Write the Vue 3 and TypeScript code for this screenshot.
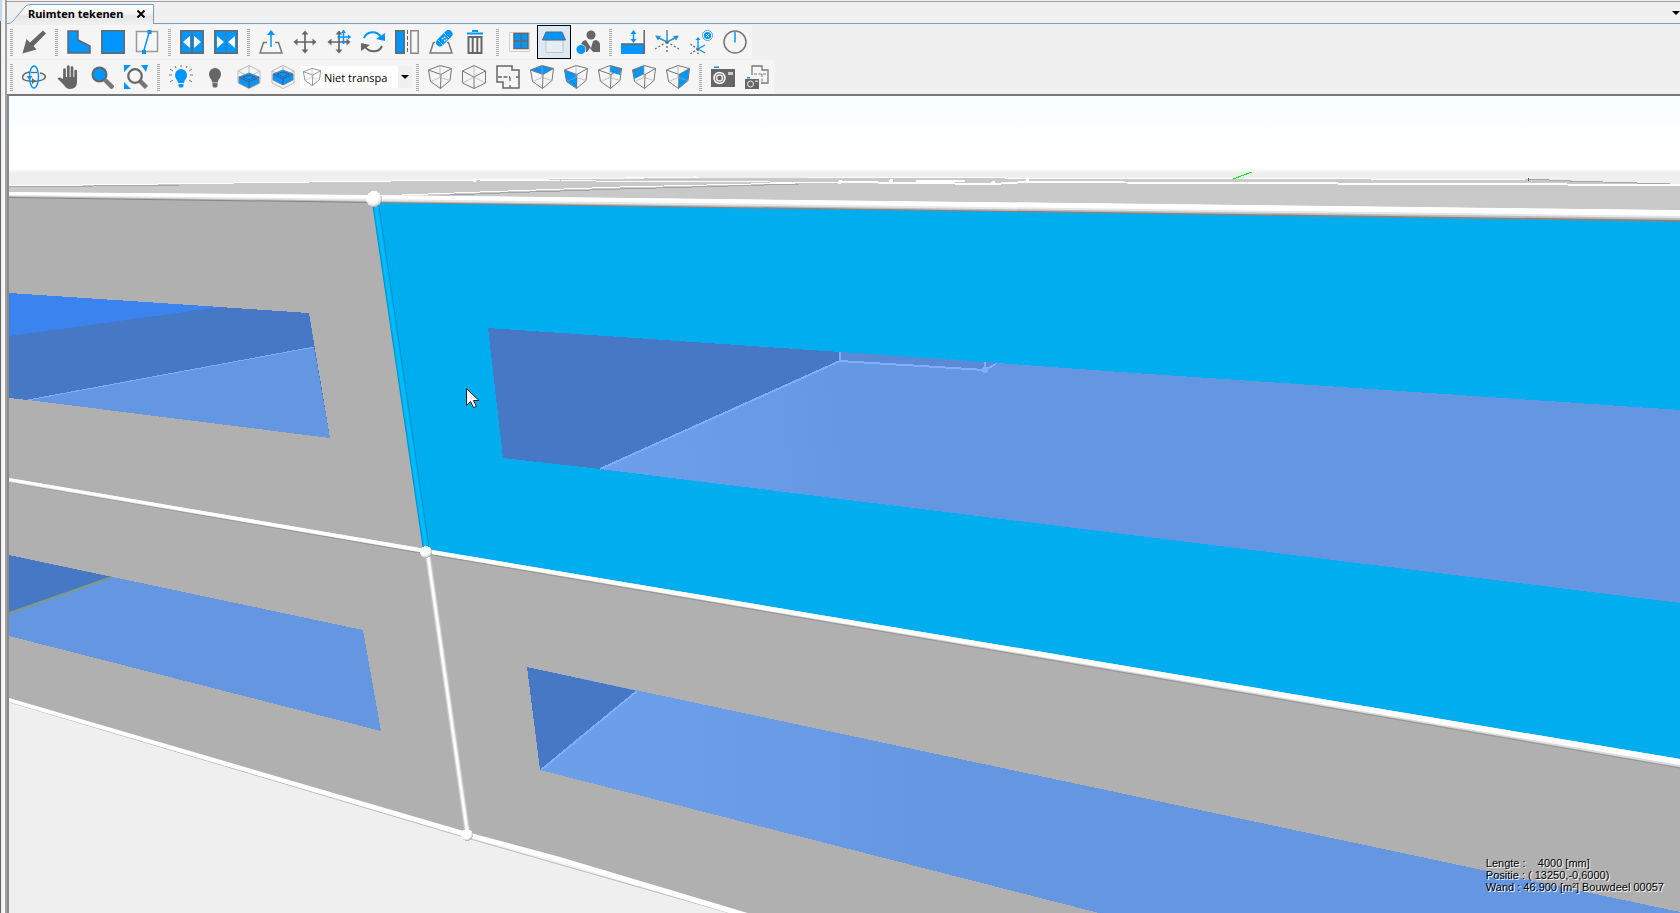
<script setup lang="ts">
import { ref } from 'vue'

interface Tool {
  id: string
  label: string
}

const box = '<path d="M.5 5 12 .5 23.5 3.5 22 15.500 12.500 23.500 2.500 16.500ZM.5 5 13 9.500 23.500 3.500M13 9.500 12.500 23.500" fill="none" stroke="#777"/><path d="M12 .5v12L2.500 16.500M12 12.500 22 15.500" fill="none" stroke="#aaa" stroke-width=".7"/>'

const slab = (y: number): string =>
  `<path d="M12 .5 23 6v12l-11 5.500L1 18V6ZM1 6l11 5.500L23 6M12 .5v12" fill="none" stroke="#bbb"/><path d="M2 ${y}l10-4 10 4v6l-10 5-10-5Z" fill="#0096ff" stroke="#6a8aa5"/><path d="M2 ${y}l10 5 10-5M12 ${y + 5}v6" fill="none" stroke="#557"/><path d="M6 ${y}l6-2 6 2-6 3Z" fill="#0096ff" stroke="#456" stroke-dasharray="2 1"/>`

const icons: Record<string, string> = {
  select: '<path d="M.5 23.500 4.500 9l3.500 3.500L21 .5 24 3.500 11.500 16l3 3.500Z" fill="#666"/>',
  lshape: '<path d="M1 1h10v9l12 6v7H1Z" fill="#0096ff" stroke="#666" stroke-width="1.500"/>',
  square: '<path d="M.8.8h22.400v22.400H.8Z" fill="#0096ff" stroke="#666" stroke-width="1.500"/>',
  divide: '<path d="M1.500 1.500h21v20h-21Z" fill="#f8f8f8" stroke="#999" stroke-width="1.500"/><path d="m14.500 1-6 21" stroke="#0096ff" stroke-width="1.500"/><path d="M12.500 0h4v4h-4ZM7 20h4v4H7Z" fill="#0096ff"/>',
  expand: '<path d="M.8.8h22.400v22.400H.8Z" fill="#0096ff" stroke="#666" stroke-width="1.500"/><path d="M12 1v22" stroke="#666" stroke-width="1.500"/><path d="M10 6v12l-7-6ZM14 6v12l7-6Z" fill="#fff"/>',
  collapse: '<path d="M.8.8h22.400v22.400H.8Z" fill="#0096ff" stroke="#666" stroke-width="1.500"/><path d="M12 1v22" stroke="#666" stroke-dasharray="3 1"/><path d="M3 6v12l7-6ZM21 6v12l-7-6Z" fill="#fff"/>',
  extrude: '<path d="M8 12.500H4.500L1 23h22l-3.500-10.500H16" fill="none" stroke="#777" stroke-width="1.500"/><path d="M12 17V2" stroke="#0096ff" stroke-width="1.500"/><path d="m8 5 4-5 4 5Z" fill="#0096ff"/>',
  move: '<path d="M12 2v20M2 12h20" stroke="#666" stroke-width="1.700"/><path d="m8.500 4.500 3.500-4 3.500 4ZM8.500 19.500l3.500 4 3.500-4ZM4.500 8.500l-4 3.500 4 3.500ZM19.500 8.500l4 3.500-4 3.500Z" fill="#666"/>',
  movegrid: '<path d="M12 2v20M2 12h20" stroke="#666" stroke-width="1.700"/><path d="m8.500 4.500 3.500-4 3.500 4ZM8.500 19.500l3.500 4 3.500-4ZM4.500 8.500l-4 3.500 4 3.500ZM19.500 8.500l4 3.500-4 3.500Z" fill="#666"/><path d="M16.500 0v14M11 7h12.500" stroke="#0096ff" stroke-width="1.500"/><path d="m14 3 2.500-3L19 3Zm0 8 2.500 3 2.500-3ZM13 4.500 10 7l3 2.500Zm8 0L24 7l-3 2.500Z" fill="#0096ff"/>',
  rotate: '<path d="M3 8C6 .5 16 .5 20 7" fill="none" stroke="#0096ff" stroke-width="2"/><path d="M24 3v8l-9-2Z" fill="#0096ff"/><path d="M21 16c-3 7-13 7-17 .5" fill="none" stroke="#666" stroke-width="2"/><path d="M0 21v-8l9 2Z" fill="#666"/>',
  mirror: '<path d="M.8.8h8.400v22.400H.8Z" fill="#0096ff" stroke="#666" stroke-width="1.500"/><path d="M15.800.8h7.400v22.400h-7.400Z" fill="#f8f8f8" stroke="#888" stroke-width="1.500"/><path d="M12.500 0v24" stroke="#666" stroke-dasharray="4 2"/>',
  patch: '<path d="M6 12.500H4.500L1 23h22l-3.500-10.500H18" fill="none" stroke="#777" stroke-width="1.500"/><path d="m11 12.500 8.500-8.500" stroke="#0096ff" stroke-width="8" stroke-linecap="round"/><path d="m9 10 6 6M15 3l6 6" stroke="#fff" stroke-dasharray="1 1"/><path d="m13 8 4 4M15 7l3 3" stroke="#fff" stroke-width="1.500" stroke-dasharray="1.500 1.500"/>',
  trash: '<path d="M4 3.500h16M9 1h6" stroke="#0096ff" stroke-width="2"/><path d="M5.500 7h13v16h-13ZM9.700 7v16M14.300 7v16" fill="none" stroke="#666" stroke-width="2"/>',
  window: '<path d="M1.500 2.500h20v19h-20Z" fill="#f5f5f5" stroke="#d0d0d0"/><path d="M6 3.500h14v15H6Z" fill="#0096ff" stroke="#666" stroke-width="1.500"/><path d="M13 3v16M6 11h14" stroke="#666" stroke-width="1.300"/>',
  roof: '<path d="M4 10h17v12.500H4Z" fill="#e6eef5" stroke="#c4c4c4"/><path d="M4 2h16l3.500 8H.5Z" fill="#0096ff" stroke="#666"/>',
  people: '<circle cx="15" cy="5" r="4.500" fill="#666"/><path d="m7 11 3-1 3 5 2 3 2-7 3-1q4 1 4 5v7h-7l-3-4-3 4h-1q1-7-5-8Z" fill="#666"/><circle cx="5" cy="19.500" r="4.500" fill="#0096ff"/>',
  level: '<path d="M0 14h24v10H0Z" fill="#0096ff"/><path d="M0 14h23.500M23.200 0v24" stroke="#666" stroke-width="1.500"/><path d="M12.500 2v9" stroke="#0096ff" stroke-width="1.500"/><path d="m9.500 4 3-4 3 4ZM9.500 9l3 4 3-4Z" fill="#0096ff"/>',
  axes: '<path d="M12 12V0M12 12 2 7M12 12l10-5" stroke="#3390cc" stroke-width="1.500"/><path d="M0 5.500 6 6 3 10.500ZM24 5.500 18 6l3 4.500Z" fill="#2492d8"/><path d="M12 12v12M12 12 0 19M12 12l12 7" stroke="#666" stroke-width="1.300" stroke-dasharray="2 2"/>',
  axesoff: '<circle cx="18.500" cy="5.500" r="5" fill="#fff" stroke="#4a9cd8"/><circle cx="18.500" cy="5.500" r="3.600" fill="#0096ff"/><path d="m17 4 3 3M20 4l-3 3" stroke="#fff"/><path d="M9 19V8M9 19l7-4M9 19l7 4" stroke="#0096ff" stroke-width="1.300"/><path d="m6.500 10 2.500-3 2.500 3Z" fill="#0096ff"/><path d="m9 19-8-5M9 19l-8 5M9 19v5" stroke="#666" stroke-width="1.300" stroke-dasharray="2 1.500"/>',
  dial: '<circle cx="12" cy="12" r="11" fill="none" stroke="#777" stroke-width="1.500"/><path d="M12 12.500V2" stroke="#0096ff" stroke-width="1.500"/>',
  orbit: '<path d="M8 7C0 8 0 13 1 14c3 3 17 3 21 0 2-2 2-5-4-6" fill="none" stroke="#666" stroke-width="1.500"/><path d="m10 13 4 3-4 3Z" fill="#666"/><ellipse cx="12" cy="12" rx="4.500" ry="11" fill="none" stroke="#0096ff" stroke-width="1.500"/><path d="M4.500 11h6l-3 4Z" fill="#0096ff"/><path d="M9 7.500h6" stroke="#666" stroke-width="1.300"/>',
  hand: '<path d="M8.500 15V4.500M12.300 13V1.700M16 13V2.500M19.700 14V6" stroke="#666" stroke-width="2.700" stroke-linecap="round"/><path d="M7.200 12H21v5q0 7-7 7-4 0-6-4l-6.500-6.500q2-2.500 5.700.8Z" fill="#666"/>',
  zoom: '<path d="m15 15 8 8" stroke="#777" stroke-width="4.500"/><circle cx="9.500" cy="9.500" r="7" fill="#0096ff" stroke="#666" stroke-width="2"/>',
  zoomfit: '<path d="M0 0h7L0 7ZM24 0h-7l5 7ZM0 24h7l-7-7Z" fill="#0096ff"/><path d="m15.500 15.500 7 7" stroke="#777" stroke-width="4.500"/><circle cx="11" cy="11" r="6.800" fill="#f5f5f5" stroke="#666" stroke-width="2.200"/>',
  lighton: '<path d="M12 4a6.200 6.200 0 0 0-6 6c0 4 3 5 3 8h6c0-3 3-4 3-8a6.200 6.200 0 0 0-6-6Z" fill="#0096ff"/><path d="M9.500 19h5v2l-1 1.500h-3L9.500 21Z" fill="#0096ff"/><path d="M12 0v2M6 1l1 2M18 1l-1 2M1 4l3 2M23 4l-3 2M0 10h3M21 10h3M1 17l3-2M23 17l-3-2" stroke="#777"/>',
  lightoff: '<path d="M12 3a6 6 0 0 0-6 6c0 4 3 5 3 8h6c0-3 3-4 3-8a6 6 0 0 0-6-6Z" fill="#666"/><path d="M9.500 18h5v3l-1 1.500h-3L9.500 21Z" fill="#666"/><path d="M9 17.800h6" stroke="#999"/>',
  slablow: slab(12),
  slabhigh: slab(9),
  box,
  cube: '<path d="M12 .5 23.500 6v12L12 23.500.5 18V6ZM.5 6 12 12l11.500-6M12 12v11.500" fill="none" stroke="#777"/><path d="M12 .5V12M.5 18 12 12l11.500 6" fill="none" stroke="#aaa" stroke-width=".7"/>',
  plan: '<path d="M1 1h15v4h7v18H7v-6H1Z" fill="none" stroke="#666" stroke-width="1.500"/><path d="M2 12h12M14 12v5M20 12h3M14 20v3" stroke="#666" stroke-width="1.300" stroke-dasharray="4 1.500"/>',
  top: '<path d="M.5 5 12 .5 23.500 3.500 13 9.500Z" fill="#0096ff"/>' + box,
  front: '<path d="M.5 5 13 9.500v14L2.500 16.500Z" fill="#0096ff"/>' + box,
  back: '<path d="m12 .5 11.500 3L22 10l-10-3Z" fill="#0096ff"/>' + box,
  left: '<path d="M.5 5 12 .5V9l-9.500 5Z" fill="#0096ff"/>' + box,
  right: '<path d="m13 9.500 10.500-6L22 15.500l-9.500 8Z" fill="#0096ff"/>' + box,
  camera: '<path d="M0 4h24v18H0Z" fill="#666"/><path d="M3 1.500h5V3H3Z" fill="#0096ff"/><circle cx="8.500" cy="13" r="5.500" fill="#666" stroke="#fff" stroke-width="1.500"/><circle cx="8.500" cy="13" r="3" fill="none" stroke="#eee" stroke-width="1.500"/><path d="M17 7h5v3h-5Z" fill="#ccc"/>',
  planshot: '<path d="M7 10V1h10v4h6v13h-7" fill="none" stroke="#777" stroke-width="1.300"/><path d="M9 9h12M17 9v9" stroke="#777" stroke-dasharray="3 1.500"/><path d="M0 14h14v10H0Z" fill="#666"/><path d="M2 12h3v1.500H2Z" fill="#0096ff"/><circle cx="5.500" cy="19" r="3" fill="none" stroke="#eee"/><path d="M10 15.500h3V17h-3Z" fill="#ccc"/>',
}

const t = (id: string, label: string): Tool => ({ id, label })

const editGroups: Tool[][] = [
  [t('select', 'Selecteren')],
  [t('lshape', 'Veelhoek'), t('square', 'Rechthoek'), t('divide', 'Splitsen')],
  [t('expand', 'Uitbreiden'), t('collapse', 'Samenvoegen')],
  [t('extrude', 'Optrekken'), t('move', 'Verplaatsen'), t('movegrid', 'Verplaatsen op raster'), t('rotate', 'Roteren'), t('mirror', 'Spiegelen'), t('patch', 'Herstellen'), t('trash', 'Verwijderen')],
  [t('window', 'Raam'), t('roof', 'Dak'), t('people', 'Personen')],
  [t('level', 'Peil'), t('axes', 'Assen'), t('axesoff', 'Assen uit'), t('dial', 'Noordpijl')],
]

const viewTools: Tool[] = [t('orbit', 'Draaien'), t('hand', 'Schuiven'), t('zoom', 'Zoomen'), t('zoomfit', 'Alles tonen')]
const lightTools: Tool[] = [t('lighton', 'Licht aan'), t('lightoff', 'Licht uit'), t('slablow', 'Onderste laag'), t('slabhigh', 'Bovenste laag')]
const cameraGroups: Tool[][] = [
  [t('box', 'Perspectief'), t('cube', 'Isometrisch'), t('plan', 'Plattegrond'), t('top', 'Boven'), t('front', 'Voor'), t('back', 'Achter'), t('left', 'Links'), t('right', 'Rechts')],
  [t('camera', 'Afbeelding'), t('planshot', 'Afbeelding plattegrond')],
]

const active = ref('roof')
const transparency = ref('Niet transpa')
const readout: string[] = [
  'Lengte :    4000 [mm]',
  'Positie : ( 13250,-0,6000)',
  'Wand : 46.900 [m²] Bouwdeel 00057',
]
</script>

<template>
  <div class="app">
    <aside class="edge"><span class="edge-top"></span></aside>
    <main class="pane">
      <header class="tabs">
        <div class="tab">
          <svg class="tab-shape" viewBox="0 0 146 20" preserveAspectRatio="none" aria-hidden="true">
            <defs>
              <linearGradient id="tabfill" x1="0" y1="0" x2="0" y2="1">
                <stop offset="0" stop-color="#fff" />
                <stop offset="0.5" stop-color="#f2f2f2" />
                <stop offset="0.6" stop-color="#e6e6e6" />
                <stop offset="1" stop-color="#f0f0f0" />
              </linearGradient>
            </defs>
            <path d="M0 20Q3 19 5 17L16 4Q18 .5 22 .5H145.500V20" fill="url(#tabfill)" stroke="#7e9cbc" />
          </svg>
          <span class="tab-title">Ruimten tekenen</span>
          <button class="close" aria-label="Sluiten">
            <svg viewBox="0 0 10 8"><path d="m1.500.5 7 7M8.500.5l-7 7" stroke="#000" stroke-width="2" /></svg>
          </button>
        </div>
        <button class="tab-menu" aria-label="Vensters">
          <svg viewBox="0 0 8 4"><path d="M0 0h8L4 4Z" /></svg>
        </button>
      </header>

      <nav class="bars">
        <div class="bar">
          <div v-for="(group, g) in editGroups" :key="g" class="group">
            <button
              v-for="tool in group"
              :key="tool.id"
              class="tool"
              :class="{ active: active === tool.id }"
              :aria-label="tool.label"
              @click="active = tool.id"
            >
              <svg viewBox="0 0 24 24" v-html="icons[tool.id]"></svg>
            </button>
          </div>
        </div>
        <div class="bar">
          <div class="group">
            <button v-for="tool in viewTools" :key="tool.id" class="tool" :aria-label="tool.label">
              <svg viewBox="0 0 24 24" v-html="icons[tool.id]"></svg>
            </button>
          </div>
          <div class="group">
            <button v-for="tool in lightTools" :key="tool.id" class="tool" :aria-label="tool.label">
              <svg viewBox="0 0 24 24" v-html="icons[tool.id]"></svg>
            </button>
            <div class="combo">
              <svg class="combo-icon" viewBox="0 0 24 24" v-html="icons.box"></svg>
              <select v-model="transparency" aria-label="Transparantie">
                <option>Niet transpa</option>
                <option>Transparant</option>
              </select>
              <svg class="combo-arrow" viewBox="0 0 8 4"><path d="M0 0h8L4 4Z" /></svg>
            </div>
          </div>
          <div v-for="(group, g) in cameraGroups" :key="g" class="group">
            <button v-for="tool in group" :key="tool.id" class="tool" :aria-label="tool.label">
              <svg viewBox="0 0 24 24" v-html="icons[tool.id]"></svg>
            </button>
          </div>
        </div>
      </nav>

      <section class="viewport">
        <svg class="scene" viewBox="9 96 1671 817" preserveAspectRatio="xMinYMin slice" role="img" aria-label="3D-weergave">
          <defs>
            <linearGradient id="sky" x1="0" y1="0" x2="0" y2="1">
              <stop offset="0" stop-color="#f8fdff" />
              <stop offset="0.75" stop-color="#fff" />
              <stop offset="0.94" stop-color="#fff" />
              <stop offset="1" stop-color="#efefef" />
            </linearGradient>
            <linearGradient id="floorA" gradientUnits="userSpaceOnUse" x1="600" y1="440" x2="880" y2="400">
              <stop offset="0" stop-color="#6d9fea" />
              <stop offset="1" stop-color="#6596e2" />
            </linearGradient>
            <linearGradient id="floorB" gradientUnits="userSpaceOnUse" x1="620" y1="0" x2="980" y2="0">
              <stop offset="0" stop-color="#6c9eea" />
              <stop offset="1" stop-color="#6596e2" />
            </linearGradient>
            <radialGradient id="node" cx="0.42" cy="0.38" r="0.62">
              <stop offset="0.6" stop-color="#fff" />
              <stop offset="0.85" stop-color="#ddd" />
              <stop offset="1" stop-color="#aaa" />
            </radialGradient>
          </defs>

          <path d="M9 173H1680V913H9Z" fill="#efefef" />
          <path d="M9 96H1680V173H9Z" fill="url(#sky)" />

          <!-- roof plane seen edge-on -->
          <path d="M9 186 475 180 700 178H1200L1525 179 1680 184V215H9Z" fill="#c9c9c9" />
          <g fill="none" stroke="#fff">
            <path d="M9 186 310 182 475 180 700 177H808L1006 178H1212L1525 180" />
            <path d="M480 180H560L596 181H700L839 183" />
            <path d="M376 196 480 192 620 187 839 182" />
            <path d="M839 182 993 184 1027 182M916 181H965" stroke-width="2" />
            <path d="M1027 182 1220 183 1680 185" stroke-width="2" />
          </g>
          <path d="M376 198 500 193 620 189 800 184M9 187 180 185M1528 179 1570 181 1670 184" fill="none" stroke="#a5a5a5" />
          <path d="M1528 178v3" stroke="#555" />
          <g fill="#fff">
            <circle cx="475" cy="180" r="2" /><circle cx="695" cy="177" r="1" /><circle cx="840" cy="182" r="2" />
            <circle cx="891" cy="181" r="2" /><circle cx="993" cy="183" r="2" /><circle cx="1006" cy="178" r="1" /><circle cx="1027" cy="181" r="2" />
          </g>
          <path d="m1233 179 19-7" stroke="#00f01a" />

          <!-- facades -->
          <path d="M9 195 374 199 1680 218V913H740L467 835 9 700Z" fill="#b0b0b0" />
          <path d="M374 202 1680 220V761L426 551Z" fill="#00aeef" />

          <!-- upper left window -->
          <path d="M9 293 309 313 330 438 28 400 9 398Z" fill="#4678c6" />
          <path d="m9 293 212 14L9 336Z" fill="#3b83ef" />
          <path d="m28 400 286-53 16 91Z" fill="#6596e2" />
          <path d="m28 400 286-53" stroke="#80adff" />

          <!-- upper right window -->
          <path d="M488 328 840 352V361L600 469 503 458Z" fill="#4678c6" />
          <path d="M840 352 1000 363 993 370H840Z" fill="#5a8ad5" />
          <path d="M600 469 840 361 985 370 997 363 1120 372 1680 410V603L841 499Z" fill="url(#floorA)" />
          <path d="M600 469 840 361 985 370 996 364" fill="none" stroke="#80adff" stroke-width="2" />
          <path d="M840 352v9M985 362v9" stroke="#80adff" stroke-width="2" />
          <circle cx="985" cy="370" r="3" fill="#80adff" />

          <!-- lower left window -->
          <path d="M9 555 363 630 381 731 9 636Z" fill="#6596e2" />
          <path d="m9 555 103 22L9 613Z" fill="#4678c6" />
          <path class="smooth" d="M9 613 112 577" stroke="#7f9b80" stroke-width="2" />

          <!-- lower right window -->
          <path d="M527 667 1680 912V913H1099L540 770Z" fill="url(#floorB)" />
          <path d="M527 667 637 691 540 770Z" fill="#4678c6" />
          <path d="M541 770 637 691" stroke="#80adff" stroke-width="2" />

          <!-- beams -->
          <g class="smooth">
            <path d="M9 192 374 195 1680 210V222L374 203 9 198Z" fill="#858585" />
            <path d="M9 192 374 195 1680 210V220L374 202 9 197Z" fill="#bdbdbd" />
            <path d="M9 192 374 195 1680 210V218L374 201 9 196Z" fill="#e6e6e6" />
            <path d="M9 192 374 195 1680 210V216L374 199 9 195Z" fill="#fff" />
            <path d="M376 206 426 547" stroke="#0093cc" stroke-width="7" />
            <path d="M376 206 426 547" stroke="#00aeef" stroke-width="5" />
            <path d="M376 206 426 547" stroke="#00bdff" stroke-width="3" />
            <path d="M9 482 426 554 1120 672 1680 768" fill="none" stroke="#969696" />
            <path d="M9 478 426 549 1120 665 1680 759V767L1120 671 426 553 9 482Z" fill="#dcdcdc" />
            <path d="M9 478 426 549 1120 665 1680 759V765L1120 670 426 553 9 481Z" fill="#fff" />
            <path d="M428 556 467 830" stroke="#c2c2c2" stroke-width="6" />
            <path d="M428 556 467 830" stroke="#e6e6e6" stroke-width="4" />
            <path d="M428 556 467 830" stroke="#fff" stroke-width="2" />
            <path d="M9 702 467 838 733 914" fill="none" stroke="#bbb" />
            <path d="M9 698 467 832 560 857 751 914H732L560 862 467 837 9 702Z" fill="#fff" />
          </g>
          <circle cx="374" cy="199" r="8" fill="url(#node)" />
          <circle cx="426" cy="552" r="6" fill="url(#node)" />
          <circle cx="467" cy="835" r="6" fill="url(#node)" />

          <path class="smooth" d="M466.500 388.500v17l4-4 3 6 3-1-3-6h5.500Z" fill="#fff" stroke="#123" />
        </svg>
        <div class="readout">
          <div v-for="line in readout" :key="line">{{ line }}</div>
        </div>
      </section>
    </main>
  </div>
</template>

<style>
body {
  margin: 0;
  overflow: hidden;
}
</style>

<style scoped>
.app {
  display: flex;
  height: 100vh;
  background: #f0f0f0;
  font-family: 'Open Sans', 'Noto Sans', sans-serif;
  font-size: 11px;
  color: #000;
}
button {
  padding: 0;
  border: 0;
  background: none;
}
svg {
  display: block;
}
.edge {
  width: 5px;
  box-sizing: border-box;
  border-left: 1px solid #666;
  border-right: 2px solid #f7f7f7;
  background: #f0eeee;
}
.edge-top {
  display: block;
  height: 21px;
  margin-left: -1px;
  width: 2px;
  background: #c4d8f0;
}
.pane {
  flex: 1;
  min-width: 0;
  display: flex;
  flex-direction: column;
  border-left: 2px solid #a0a0a0;
}
.tabs {
  display: flex;
  align-items: flex-end;
  justify-content: space-between;
  height: 23px;
  box-sizing: border-box;
  border-top: 1px solid #a0a0a0;
  border-bottom: 1px solid #7e9cbc;
  margin-top: 1px;
}
.tab {
  position: relative;
  display: flex;
  align-items: center;
  height: 20px;
  width: 146px;
  margin-left: 1px;
  margin-bottom: -1px;
}
.tab-shape {
  position: absolute;
  inset: 0;
  width: 100%;
  height: 100%;
}
.tab-title {
  position: relative;
  padding-left: 20px;
  font-family: 'Noto Sans', sans-serif;
  font-weight: 700;
  line-height: 20px;
  white-space: nowrap;
  flex: 1;
}
.close {
  position: relative;
  margin-right: 8px;
}
.close svg {
  width: 10px;
  height: 8px;
}
.tab-menu {
  align-self: center;
}
.tab-menu svg {
  width: 8px;
  height: 4px;
}
.bars {
  display: flex;
  flex-direction: column;
  align-items: flex-start;
  gap: 1px;
  padding-top: 1px;
}
.bar {
  display: flex;
  gap: 1px;
  height: 34px;
  background: #f5f5f5;
}
.group {
  display: flex;
  align-items: center;
}
.group::before {
  content: '';
  width: 3px;
  height: 27px;
  margin: 0 4px 0 3px;
  background: repeating-linear-gradient(to bottom, #a8a8a8 0 1px, #f5f5f5 1px 2px);
}
.tool {
  display: grid;
  place-items: center;
  width: 34px;
  height: 34px;
  box-sizing: border-box;
}
.tool svg {
  width: 24px;
  height: 24px;
}
.tool.active {
  background: #dce9f4;
  border: 1px solid #000;
}
.combo {
  position: relative;
  display: flex;
  align-items: center;
  width: 112px;
  height: 22px;
  background: #fff;
}
.combo-icon {
  width: 18px;
  height: 18px;
  margin-left: 3px;
}
.combo select {
  flex: 1;
  min-width: 0;
  height: 22px;
  padding: 0 0 0 3px;
  border: 0;
  background: transparent;
  appearance: none;
  font: inherit;
  color: inherit;
}
.combo-arrow {
  width: 8px;
  height: 4px;
  padding: 9px 3px;
  background: #f0f0f0;
  pointer-events: none;
}
.viewport {
  position: relative;
  flex: 1;
  min-height: 0;
  overflow: hidden;
  border-top: 2px solid #777;
  border-left: 2px solid #8a8a8a;
}
.scene {
  width: 100%;
  height: 100%;
  shape-rendering: crispEdges;
}
.smooth {
  shape-rendering: auto;
}
.readout {
  position: absolute;
  right: 16px;
  bottom: 20px;
  font-family: 'Liberation Sans', Arial, sans-serif;
  line-height: 12px;
  white-space: pre;
  text-shadow: 1px 1px 0 #fff;
}
</style>
